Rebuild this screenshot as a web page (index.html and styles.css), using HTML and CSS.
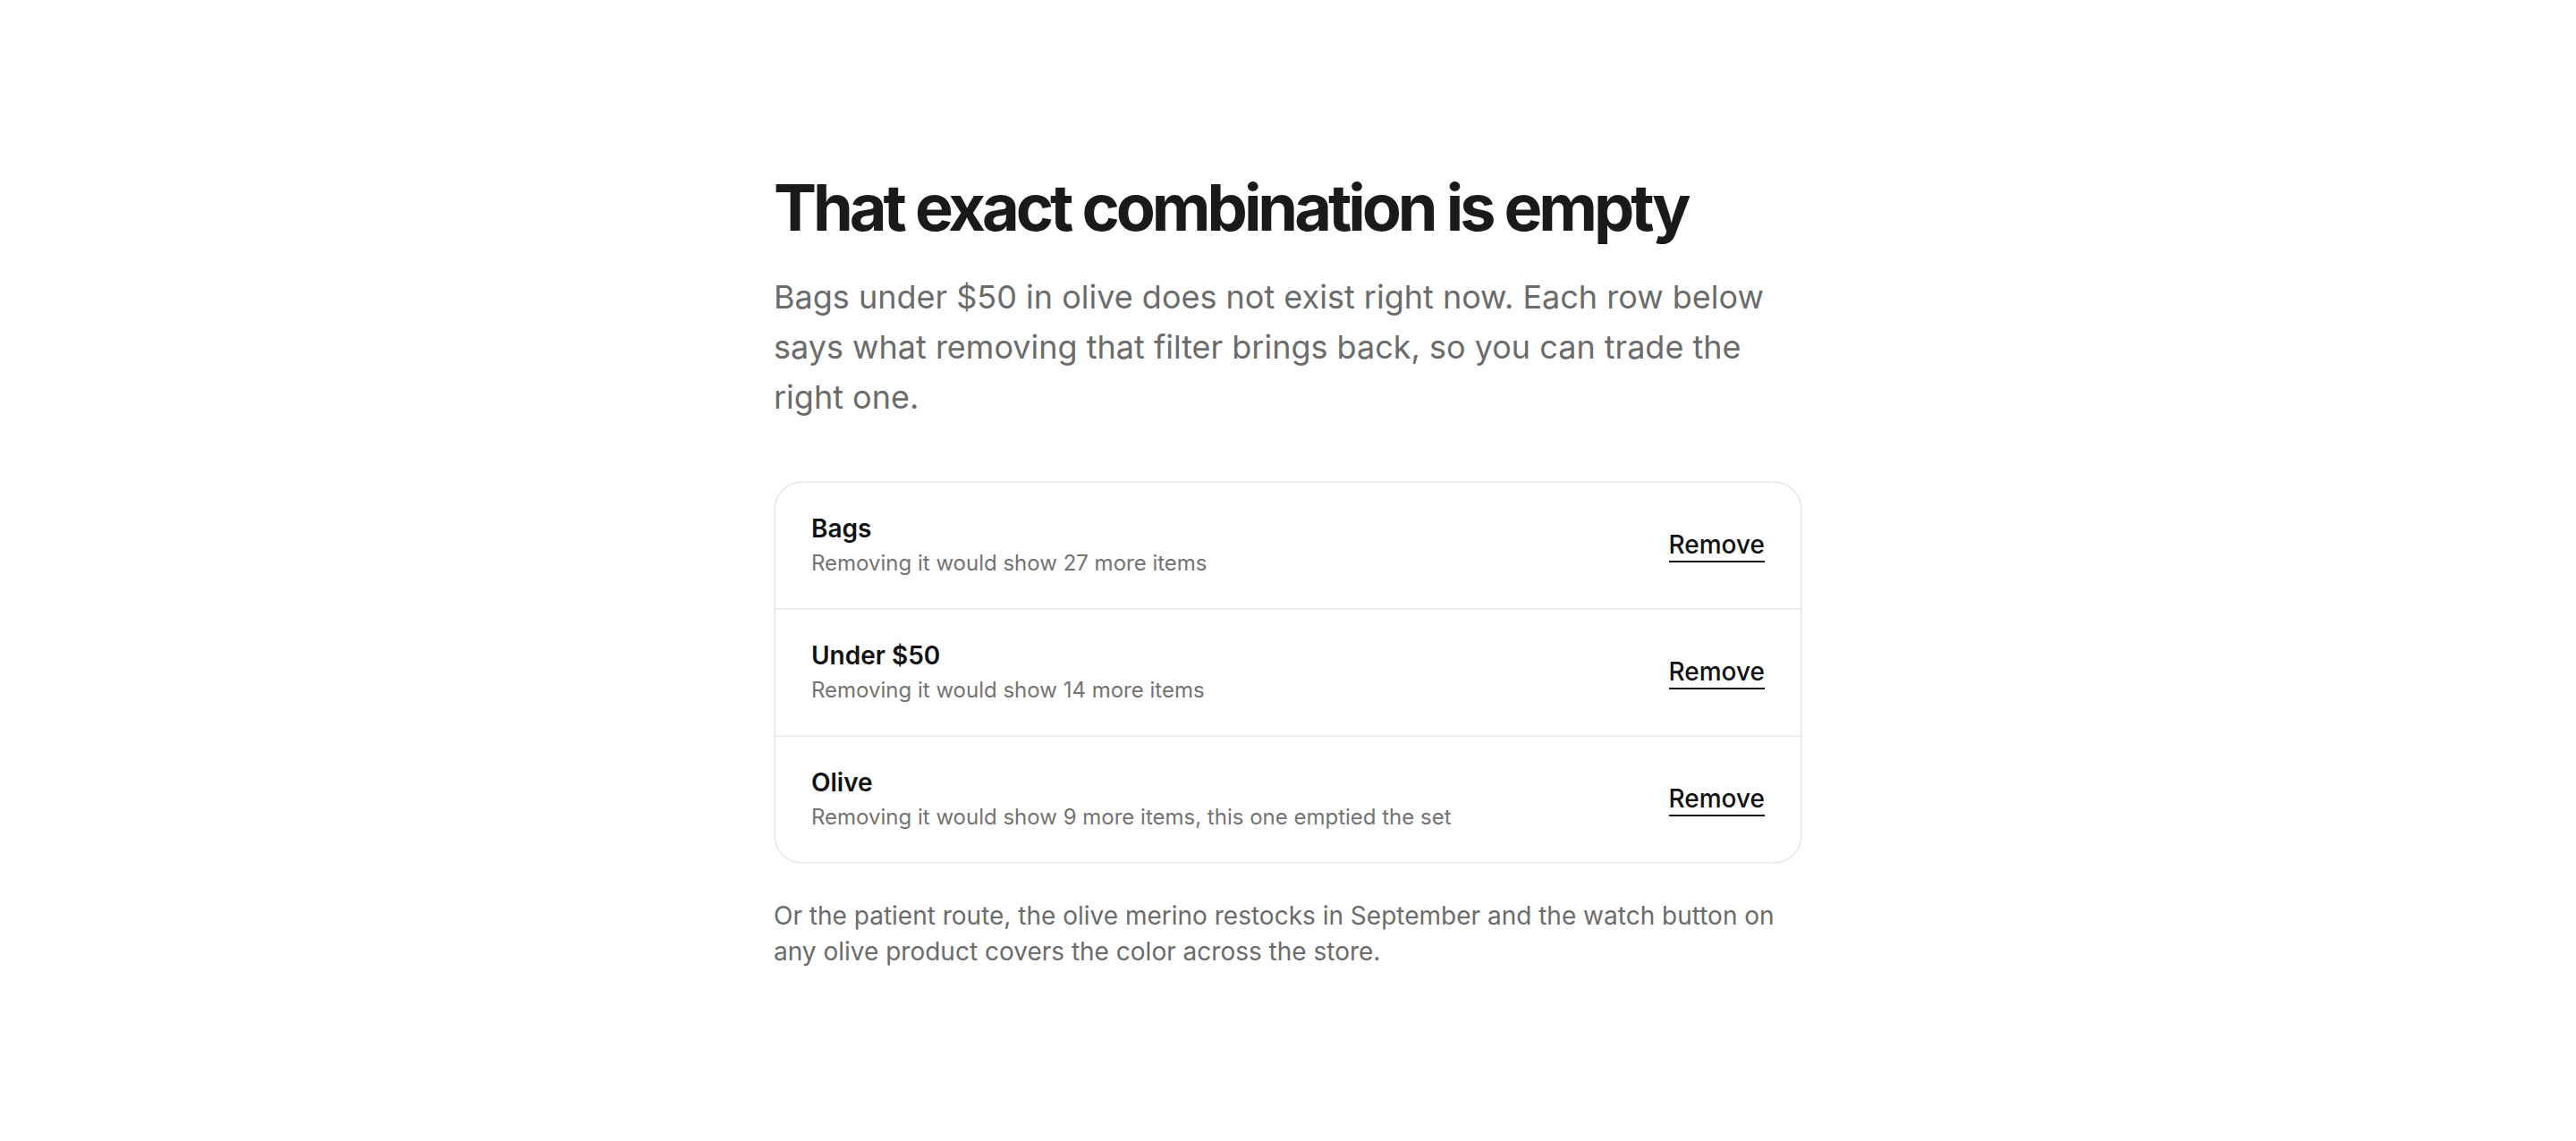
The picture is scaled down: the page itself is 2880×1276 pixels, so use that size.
FILE: index.html
```html
<!doctype html>
<html>
<head>
	<meta charset="utf-8">
	<title>No results</title>
	<link rel="stylesheet" href="styles.css">
</head>
<body>
	<main class="page">
		<section class="empty">
			<h1 class="empty-title">That exact combination is empty</h1>
			<p class="empty-lead">Bags under $50 in olive does not exist right now. Each row below says what removing that filter brings back, so you can trade the right one.</p>

			<ul class="filters">
				<li class="filter">
					<div class="filter-text">
						<span class="filter-name">Bags</span>
						<span class="filter-note">Removing it would show 27 more items</span>
					</div>
					<a href="#" class="filter-remove">Remove</a>
				</li>
				<li class="filter">
					<div class="filter-text">
						<span class="filter-name">Under $50</span>
						<span class="filter-note">Removing it would show 14 more items</span>
					</div>
					<a href="#" class="filter-remove">Remove</a>
				</li>
				<li class="filter">
					<div class="filter-text">
						<span class="filter-name">Olive</span>
						<span class="filter-note">Removing it would show 9 more items, this one emptied the set</span>
					</div>
					<a href="#" class="filter-remove">Remove</a>
				</li>
			</ul>

			<p class="empty-foot">Or the patient route, the olive merino restocks in September and the watch button on any olive product covers the color across the store.</p>
		</section>
	</main>
</body>
</html>
```

FILE: styles.css
```css
*{
	margin:0;
	padding:0;
	box-sizing:border-box;
}
body{
	background:#fff;
	font-family:Inter, "Noto Sans", sans-serif;
	color:#111;
}
.page{
	min-height:100vh;
	display:flex;
	align-items:center;
	justify-content:center;
}
.empty{
	width:1150px;
}
.empty-title{
	font-size:72px;
	line-height:79px;
	font-weight:700;
	letter-spacing:-0.056em;
	color:#1a1a1a;
}
.empty-lead{
	margin-top:33px;
	font-size:36px;
	line-height:56px;
	color:#6b6b6b;
}

/* filter list */
.filters{
	list-style:none;
	margin-top:66px;
	border:2px solid #ececec;
	border-radius:32px;
}
.filter{
	display:flex;
	align-items:center;
	justify-content:space-between;
	padding:33px 40px;
	height:140px;
}
.filter + .filter{
	border-top:2px solid #ececec;
	height:142px;
}
.filter-text{
	display:flex;
	flex-direction:column;
}
.filter-name{
	font-size:28px;
	line-height:36px;
	font-weight:600;
	color:#111;
}
.filter-note{
	margin-top:4px;
	font-size:24px;
	line-height:34px;
	color:#737373;
}
.filter-remove{
	font-size:28px;
	font-weight:500;
	color:#111;
	text-decoration:none;
	border-bottom:2px solid #111;
	padding-bottom:1px;
}

.empty-foot{
	margin-top:38px;
	font-size:28px;
	line-height:40px;
	color:#6b6b6b;
}
```
